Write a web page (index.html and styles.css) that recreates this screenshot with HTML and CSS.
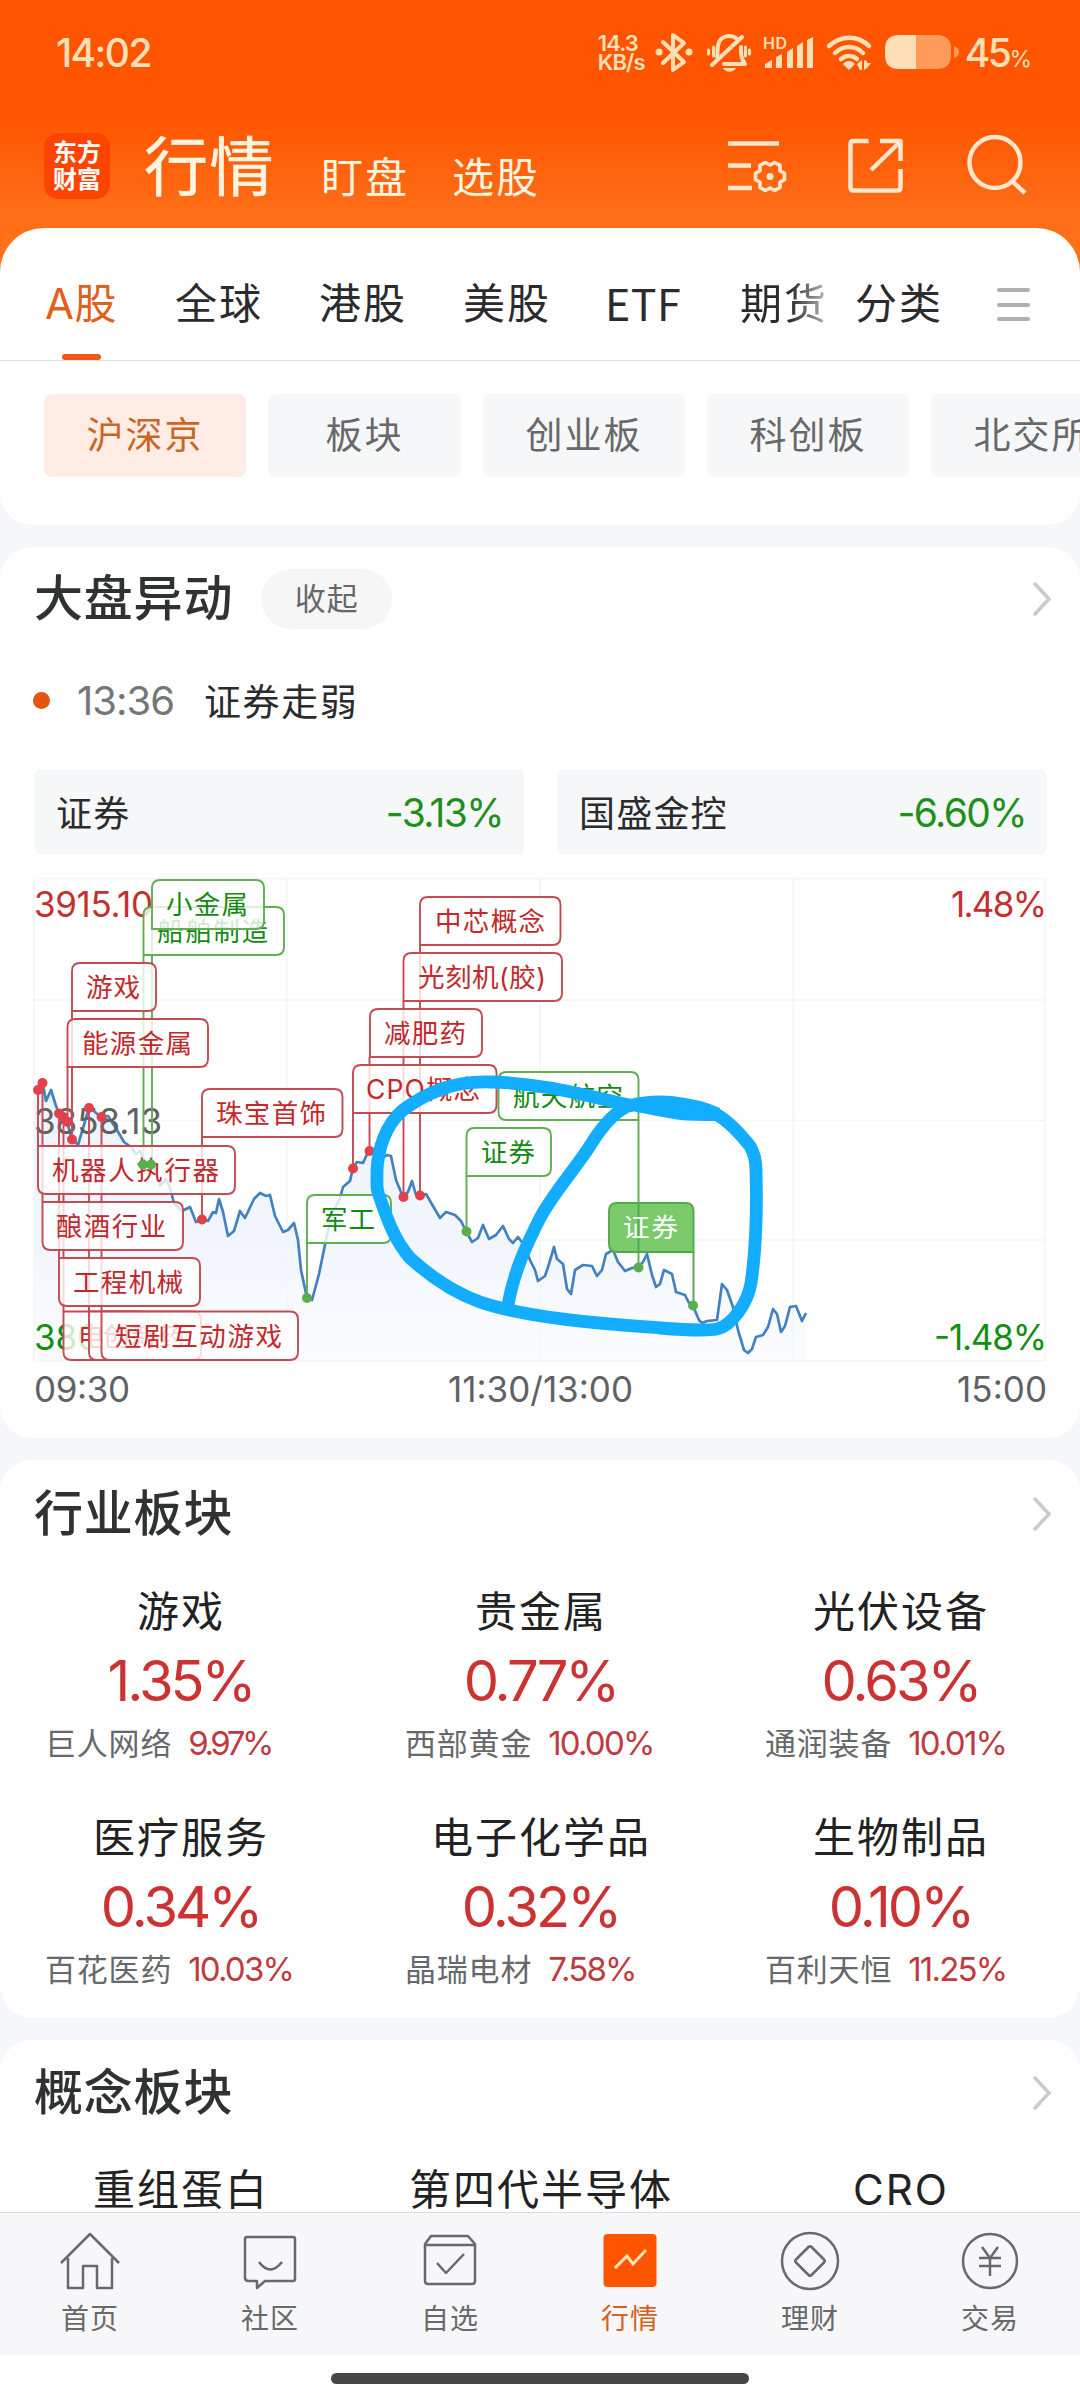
FILE: index.html
```html
<!DOCTYPE html>
<html lang="zh-CN">
<head>
<meta charset="utf-8">
<title>行情</title>
<link rel="stylesheet" href="styles.css">
</head>
<body>
<div class="app">
  <header class="header">
    <div class="status">
      <span class="clock">14:02</span>
      <span class="net"><span>14.3</span><span>KB/s</span></span>
      <svg class="status-icons" viewBox="650 26 320 52" width="320" height="52">
        <g fill="none" stroke="#ffdfb5" stroke-width="4" stroke-linejoin="round" stroke-linecap="round">
          <path d="M664 42l21 20-11 8V35l11 8-21 20" />
          <path d="M713 65L743 37" />
          <path d="M718 57c1-4 0-8 1-11 1-7 6-10 11-10 4 0 6 1 8 3M742 47c0 8 0 11 4 17H725" />
          <path d="M709.500 50v4M714.500 47v9M746.500 47v9M750.500 50v4" stroke-width="3"/>
          <path d="M830 46c12-11 29-11 40 0M836 53c8-8 20-8 28 0M842 59c5-4 11-4 16 0" stroke-width="4.500"/>
        </g>
        <g fill="#ffdfb5">
          <circle cx="660" cy="52" r="3.500"/><circle cx="690" cy="52" r="3.500"/>
          <path d="M724 68h13c-3 5-10 5-13 0z"/>
          <text x="764" y="48.500" font-size="16" class="hd" textLength="24">HD</text>
          <path d="M766 68v-4l7-4v8zM777 68v-11l6-3v14zM788 68V52l6-4v20zM798 68V46l6-4v26zM808 68V40l6-3v31z"/>
          <path d="M844 64c3-4 9-4 12 0l-6 6z"/>
          <path d="M858 64l5-4v10h-2zM865 60v10l3-2 4-5h-4v-2z"/>
          <path d="M900 35h17v34h-17q-14 0-14-14V49q0-14 14-14z"/>
          <path d="M917 35h21q14 0 14 14v6q0 14-14 14h-21zM955 46q5 2 5 6t-5 6z" opacity=".5"/>
        </g>
      </svg>
      <span class="battery">45<small>%</small></span>
    </div>
    <div class="topbar">
      <div class="logo"><span>东方</span><span>财富</span></div>
      <span class="top-main">行情</span>
      <span class="top-sub">盯盘</span>
      <span class="top-sub">选股</span>
      <svg class="top-icons" viewBox="720 130 320 70" width="320" height="70">
        <g fill="none" stroke="#ffe6cc" stroke-width="4.500" stroke-linejoin="round">
          <path d="M728 143.500h51M728 165.500h23M728 188h24"/>
          <path d="M784.500 173.400V179.600L780 182.200V187.600L774.600 190.500 770 188 765.400 190.500 760 187.600V182.200L755.500 179.600V173.400L760 170.800V165.400L765.400 162.500 770 165 774.600 162.500 780 165.400V170.800Z" stroke-width="3.600"/>
          <path d="M868.500 141h-15q-3 0-3 3v43.500q0 3 3 3h44q3 0 3-3V169M880 141h20.500v20M900 142l-29 28"/>
          <circle cx="995" cy="162.500" r="25.500"/><path d="M1012 181l13 12"/>
        </g>
        <circle cx="770" cy="176.500" r="3.500" fill="#ffe6cc"/>
      </svg>
    </div>
  </header>

  <main class="feed">
    <section class="card tabs-card">
      <nav class="tabs">
        <span class="tab tab-active">A股</span><span class="tab">全球</span><span class="tab">港股</span><span class="tab">美股</span><span class="tab">ETF</span><span class="tab tab-fade">期货</span><span class="tab tab-last">分类</span>
        <span class="menu"><i></i><i></i><i></i></span>
      </nav>
      <div class="chips">
        <span class="chip chip-active">沪深京</span><span class="chip chip-short">板块</span><span class="chip">创业板</span><span class="chip">科创板</span><span class="chip">北交所</span>
      </div>
    </section>

    <section class="card move-card">
      <div class="card-head">
        <h2>大盘异动</h2><span class="fold">收起</span>
        <svg class="chevron" viewBox="0 0 20 34" width="20" height="34"><path d="M2 2l14 15L2 32"/></svg>
      </div>
      <div class="event"><i class="dot"></i><span class="event-time">13:36</span><span class="event-name">证券走弱</span></div>
      <div class="quotes">
        <div class="quote"><span>证券</span><b>-3.13%</b></div>
        <div class="quote"><span>国盛金控</span><b>-6.60%</b></div>
      </div>
      <svg class="chart" viewBox="0 870 1080 568" width="1080" height="568">
        <defs>
          <linearGradient id="area" x1="0" y1="1080" x2="0" y2="1360" gradientUnits="userSpaceOnUse"><stop offset="0" stop-color="#edf3fb"/><stop offset=".6" stop-color="#f2f6fc"/><stop offset="1" stop-color="#fbfcff"/></linearGradient>
        </defs>
        <path class="area" d="M34 1361V1090L38 1090 42 1082 46 1101 51 1090 56 1106 67 1122 72 1139 78 1145 83 1128 89 1108 101 1117 108 1116 124 1142 136 1154 147 1166 155 1168 160 1186 170 1188 174 1203 182 1211 190 1207 196 1222 208 1221 219 1199 228 1236 234 1231 240 1211 245 1218 260 1193 270 1195 275 1216 283 1232 294 1223 298 1240 307 1298 312 1300 327 1235 333 1212 343 1187 353 1168 369 1150 391 1156 396 1180 403 1197 412 1181 416 1195 426 1194 440 1218 455 1215 466 1231 472 1242 483 1225 489 1239 503 1226 513 1243 524 1245 538 1281 545 1276 554 1247 563 1264 571 1294 575 1270 592 1266 597 1276 606 1254 613 1250 625 1271 638 1267 647 1254 656 1287 664 1270 676 1292 685 1295 702 1323 717 1320 722 1284 733 1307 744 1350 756 1337 763 1335 773 1309 781 1332 790 1307 802 1321 806 1313V1361Z"/>
        <path class="grid-lines" d="M34 878.500H1046M34 1000H1046M34 1120.500H1046M34 1240H1046M34 1361H1046M34 878V1361M287 878V1361M540 878V1361M793 878V1361M1045 878V1361"/>
        <polyline class="price" points="38,1090 42.500,1082 46,1101 51,1090 56,1106 59,1113 67,1122 72,1139 78,1145 83,1128 89,1108 95,1112 101,1117 108,1116 117,1130 124,1142 131,1147 136,1154 140,1151 147,1166 155,1168 160,1186 166,1179 170,1188 174,1203 182,1211 190,1207 196,1222 202,1220 208,1221 213,1212 216,1213 219,1199 223,1212 228,1236 234,1231 240,1211 245,1218 254,1199 260,1193 266,1196 270,1195 275,1216 283,1232 288,1230 294,1223 298,1240 301,1270 307,1298 312,1300 319,1274 327,1235 333,1212 340,1198 343,1187 350,1181 353,1168 357,1162 363,1163 369,1150 374,1149 380,1160 387,1155 391,1156 396,1180 403,1197 408,1192 412,1181 416,1195 420,1195 426,1194 433,1206 440,1218 446,1212 455,1215 461,1221 466,1231 472,1242 478,1238 483,1225 489,1239 496,1235 503,1226 509,1239 513,1243 518,1237 524,1245 530,1260 535,1270 538,1281 545,1276 549,1264 554,1247 557,1259 563,1264 567,1289 571,1294 575,1270 583,1265 592,1266 597,1276 602,1270 606,1254 613,1250 618,1262 625,1271 632,1268 638,1267 643,1262 647,1254 652,1275 656,1287 660,1284 664,1270 672,1274 676,1292 685,1295 689,1303 693,1306 699,1320 702,1323 707,1321 717,1320 722,1284 727,1290 733,1307 738,1330 744,1350 748,1353 752,1349 756,1337 763,1335 768,1327 773,1309 777,1314 781,1332 785,1326 790,1307 796,1306 802,1321 806,1313"/>
        <g class="axis">
          <text x="34" y="917" class="up" textLength="119">3915.10</text>
          <text x="34" y="1134" textLength="128">3858.13</text>
          <text x="34" y="1350" class="down" textLength="122">3801.16</text>
          <text x="951" y="917" class="up" textLength="96">1.48%</text>
          <text x="934" y="1350" class="down" textLength="113">-1.48%</text>
          <text x="34" y="1402" textLength="96">09:30</text>
          <text x="448" y="1402" textLength="185">11:30/13:00</text>
          <text x="957" y="1402" textLength="90">15:00</text>
        </g>
        <g class="tag tag-down">
          <path class="pole" d="M143.500 955V1164M152 929V1164M307 1243V1298M466.500 1176V1231M638.500 1120V1267"/>
          <path d="M143.500 955V915q0-8 8-8H276q8 0 8 8V947q0 8-8 8Z"/><text x="158" y="941" textLength="111">船舶制造</text>
          <path d="M152 929V888q0-8 8-8H256q8 0 8 8V921q0 8-8 8Z"/><text x="167" y="914" textLength="82">小金属</text>
          <path d="M307 1243V1203q0-8 8-8H383q8 0 8 8V1235q0 8-8 8Z"/><text x="322" y="1229" textLength="54">军工</text>
          <path d="M466.500 1176V1136q0-8 8-8H543q8 0 8 8V1168q0 8-8 8Z"/><text x="482" y="1162" textLength="54">证券</text>
          <path d="M638.500 1120H506.500q-8 0-8-8V1080q0-8 8-8H630.500q8 0 8 8Z"/><text x="514" y="1106" textLength="110">航天航空</text>
        </g>
        <g class="tag tag-up">
          <path class="pole" d="M38 1090V1146M42.500 1082V1202M59 1113V1258M63.500 1117V1311M67.500 1067V1122M72 1011V1139M89 1108V1311M101.500 1117V1311M202 1137V1219M353 1113V1168M369.500 1057V1150M403.500 1001V1196M420 945V1195"/>
          <path d="M72 1011V971q0-8 8-8H148q8 0 8 8V1003q0 8-8 8Z"/><text x="87" y="997" textLength="54">游戏</text>
          <path d="M67.500 1067V1027q0-8 8-8H200q8 0 8 8V1059q0 8-8 8Z"/><text x="83" y="1053" textLength="110">能源金属</text>
          <path d="M202 1137V1097q0-8 8-8H334.500q8 0 8 8V1129q0 8-8 8Z"/><text x="217" y="1123" textLength="110">珠宝首饰</text>
          <path d="M420 945V905q0-8 8-8H552.500q8 0 8 8V937q0 8-8 8Z"/><text x="436" y="931" textLength="110">中芯概念</text>
          <path d="M403.500 1001V961q0-8 8-8H554q8 0 8 8V993q0 8-8 8Z"/><text x="419" y="987" textLength="128">光刻机(胶)</text>
          <path d="M370 1057V1017q0-8 8-8H474q8 0 8 8V1049q0 8-8 8Z"/><text x="385" y="1043" textLength="82">减肥药</text>
          <path d="M353 1113V1073q0-8 8-8H488.500q8 0 8 8V1105q0 8-8 8Z"/><text x="367" y="1099" textLength="114">CPO概念</text>
          <path d="M38 1146H227q8 0 8 8V1186q0 8-8 8H46q-8 0-8-8Z"/><text x="53" y="1180" textLength="167">机器人执行器</text>
          <path d="M42.500 1202H175q8 0 8 8V1242q0 8-8 8H50.500q-8 0-8-8Z"/><text x="57" y="1236" textLength="110">酿酒行业</text>
          <path d="M59 1258H192q8 0 8 8V1298q0 8-8 8H67q-8 0-8-8Z"/><text x="74" y="1292" textLength="110">工程机械</text>
          <path d="M63.500 1311.500H140q8 0 8 8V1352q0 8-8 8H71.500q-8 0-8-8Z"/><text x="79" y="1346" textLength="54">电机</text>
          <path d="M89 1311.500H193q8 0 8 8V1352q0 8-8 8H97q-8 0-8-8Z"/><text x="104" y="1346" textLength="82">创新药</text>
          <path d="M101.500 1311.500H290q8 0 8 8V1352q0 8-8 8H109.500q-8 0-8-8Z"/><text x="116" y="1346" textLength="167">短剧互动游戏</text>
        </g>
        <g class="tag tag-current">
          <path d="M693.500 1252H617q-8 0-8-8V1211q0-8 8-8H685.500q8 0 8 8Z"/><path class="pole" d="M693.500 1252V1305"/><path class="pole" d="M638.500 1203V1252"/><text x="624" y="1237" textLength="55">证券</text>
        </g>
        <g fill="#e0414a"><circle cx="38" cy="1090" r="5"/><circle cx="42.500" cy="1083" r="5"/><circle cx="59" cy="1113.500" r="5"/><circle cx="63" cy="1117" r="5"/><circle cx="67.500" cy="1122" r="5"/><circle cx="72" cy="1139.500" r="5"/><circle cx="89" cy="1108" r="5"/><circle cx="101.500" cy="1117" r="5"/><circle cx="202" cy="1219.500" r="5"/><circle cx="353" cy="1168.500" r="5"/><circle cx="369.500" cy="1151" r="5"/><circle cx="403.500" cy="1197" r="5"/><circle cx="420" cy="1195.500" r="5"/></g>
        <g fill="#57b04b"><circle cx="143" cy="1164.500" r="5"/><circle cx="151" cy="1164.500" r="5"/><circle cx="307" cy="1298" r="5"/><circle cx="466.500" cy="1231.500" r="5"/><circle cx="638.500" cy="1267.500" r="5"/><circle cx="693" cy="1305.500" r="5"/></g>
        <g class="ink">
          <path d="M634 1106C590 1097 545 1083 490 1082C450 1081 425 1094 403 1110C385 1125 378 1150 377 1170C377 1184 376 1190 380 1198C388 1222 396 1242 410 1258C432 1278 455 1293 480 1302C530 1319 610 1324 660 1328C685 1330 705 1331 717 1329C732 1326 748 1302 751 1283C756 1250 757 1205 756 1170C756 1160 754 1153 750 1146C742 1136 730 1122 716 1114L706 1111"/>
          <path d="M628 1106C615 1112 604 1124 593 1141C578 1166 555 1190 540 1218C528 1242 514 1270 508 1305"/>
          <path class="blot" d="M630 1099Q650 1094 672 1096Q700 1099 720 1108L716 1121Q695 1121 680 1120Q655 1116 632 1111Z"/>
        </g>
      </svg>
    </section>

    <section class="card sector-card">
      <div class="card-head">
        <h2>行业板块</h2>
        <svg class="chevron" viewBox="0 0 20 34" width="20" height="34"><path d="M2 2l14 15L2 32"/></svg>
      </div>
      <div class="sectors">
        <div class="sector"><span class="name">游戏</span><span class="pct">1.35%</span><span class="lead">巨人网络<em class="tight">9.97%</em></span></div>
        <div class="sector"><span class="name">贵金属</span><span class="pct">0.77%</span><span class="lead">西部黄金<em>10.00%</em></span></div>
        <div class="sector"><span class="name">光伏设备</span><span class="pct">0.63%</span><span class="lead">通润装备<em>10.01%</em></span></div>
        <div class="sector"><span class="name">医疗服务</span><span class="pct">0.34%</span><span class="lead">百花医药<em>10.03%</em></span></div>
        <div class="sector"><span class="name">电子化学品</span><span class="pct">0.32%</span><span class="lead">晶瑞电材<em>7.58%</em></span></div>
        <div class="sector"><span class="name">生物制品</span><span class="pct">0.10%</span><span class="lead">百利天恒<em>11.25%</em></span></div>
      </div>
    </section>

    <section class="card concept-card">
      <div class="card-head">
        <h2>概念板块</h2>
        <svg class="chevron" viewBox="0 0 20 34" width="20" height="34"><path d="M2 2l14 15L2 32"/></svg>
      </div>
      <div class="sectors">
        <div class="sector"><span class="name">重组蛋白</span></div>
        <div class="sector"><span class="name">第四代半导体</span></div>
        <div class="sector"><span class="name">CRO</span></div>
      </div>
    </section>
  </main>

  <nav class="bottom">
    <a class="item"><svg viewBox="0 0 64 64" width="64" height="64"><path d="M3 34L32 5l29 29M10 29v30h15V37h14v22h15V29"/></svg><span>首页</span></a>
    <a class="item"><svg viewBox="0 0 64 64" width="64" height="64"><path d="M9 8h46q2 0 2 2v40q0 2-2 2H27l-8 7v-7h-8q-4 0-4-3V10q0-2 2-2zM21 33q11 15 23 0"/></svg><span>社区</span></a>
    <a class="item"><svg viewBox="0 0 64 64" width="64" height="64"><path d="M7 15l6-8h37l7 8v37q0 3-3 3H10q-3 0-3-3zM7 16h50M19 34l9 10 18-19"/></svg><span>自选</span></a>
    <a class="item item-active"><svg viewBox="0 0 64 64" width="64" height="64"><rect x="5.500" y="5" width="53" height="53" rx="4"/><path d="M17 39l12-12 6 8 13-14"/></svg><span>行情</span></a>
    <a class="item"><svg viewBox="0 0 64 64" width="64" height="64"><circle cx="32" cy="32" r="28"/><path d="M30.500 18q1.500-1.500 3 0l12.500 12.500q1.500 1.500 0 3L33.500 46q-1.500 1.500-3 0L18 33.500q-1.500-1.500 0-3z"/></svg><span>理财</span></a>
    <a class="item"><svg viewBox="0 0 64 64" width="64" height="64"><circle cx="32" cy="32" r="27"/><path d="M24 18l8 11 8-11M21 29h22M21 37h22M32 29v18"/></svg><span>交易</span></a>
  </nav>
  <div class="gesture"><i></i></div>
</div>
</body>
</html>
```
FILE: styles.css
```css
* { box-sizing: border-box; }
body {
  margin: 0;
  font-family: Inter, "Noto Sans CJK SC", sans-serif;
  color: #2b2b2d;
}
i, em, b { font-style: normal; font-weight: 400; }
.app {
  width: 1080px;
  height: 2400px;
  display: flex;
  flex-direction: column;
  overflow: hidden;
  background: linear-gradient(#ff5500 0, #ff5500 115px, #ff6e18 215px, #ff7418 290px, #f6f7fa 291px);
}

/* header */
.header { height: 228px; flex: none; }
.status {
  height: 104px;
  padding: 0 48px 0 56px;
  display: flex;
  align-items: center;
  color: #ffdfb5;
}
.clock { width: 543px; font-size: 39px; font-weight: 500; letter-spacing: -1.600px; white-space: nowrap; }
.net { width: 51px; display: flex; flex-direction: column; font-size: 22px; line-height: 19px; font-weight: 600; letter-spacing: -.9px; padding-top: 2px; }
.status-icons { flex: none; }
.hd { font-weight: 600; }
.battery { margin-left: -4px; font-size: 39px; font-weight: 500; letter-spacing: -2.500px; white-space: nowrap; }
.battery small { font-size: 23px; font-weight: 400; letter-spacing: 0; }
.topbar { display: flex; align-items: flex-start; padding: 26px 40px 0 44px; height: 124px; color: #fff4df; }
.logo {
  width: 66px; height: 66px; margin-top: 3px;
  border-radius: 14px;
  background: #ff4400;
  color: #fff;
  display: flex; flex-direction: column; align-items: center; justify-content: center;
  font-size: 24px; line-height: 27px; font-weight: 700;
}
.top-main { margin-left: 34px; font-size: 64px; line-height: 73px; font-weight: 400; -webkit-text-stroke: .6px #fff4df; letter-spacing: 1.500px; width: 177px; white-space: nowrap; }
.top-sub { font-size: 42px; line-height: 95px; letter-spacing: 2px; width: 131px; white-space: nowrap; }
.top-icons { margin-left: auto; flex: none; }

/* cards */
.feed { flex: 1; min-height: 0; overflow: hidden; display: flex; flex-direction: column; gap: 22px; }
.card { background: #fff; border-radius: 32px; flex: none; overflow: hidden; }
.tabs-card { height: 297px; border-radius: 44px 44px 32px 32px; }
.tabs {
  height: 133px;
  border-bottom: 1.500px solid #dcdddd;
  display: flex;
  padding-left: 45px;
  font-size: 42px;
  line-height: 152px;
  white-space: nowrap;
}
.tab { letter-spacing: 2px; width: 144px; }
.tab:nth-child(5) { width: 133px; margin-left: -2px; margin-right: 2px; letter-spacing: .5px; font-family: "Noto Sans CJK SC"; font-size: 43px; line-height: 149px; }
.tab-active { position: relative; width: 130px; color: #e0601c; letter-spacing: .5px; }
.tab-active::after { content: ""; position: absolute; left: 17px; bottom: 0; width: 39px; height: 6px; border-radius: 3px; background: #ea5a14; }
.tab-fade { width: 115px; background: linear-gradient(90deg, #2b2b2d 50px, #b5b5b7 86px); background-clip: text; color: transparent; }
.tab-last { width: 142px; }
.menu { display: flex; flex-direction: column; gap: 10.500px; padding-top: 60px; }
.menu i { width: 33px; height: 4px; border-radius: 2px; background: #b0b0b0; }
.chips { display: flex; gap: 22px; padding: 33px 0 0 44px; }
.chip {
  flex: none; width: 202px; height: 83px;
  border-radius: 8px; background: #f6f7f8; color: #67686a;
  font-size: 37px; line-height: 84px; letter-spacing: 2px; text-align: center;
}
.chip-short { width: 193px; }
.chip-active { background: #ffece5; color: #cc6424; }

.card-head { display: flex; align-items: center; height: 104px; padding: 0 27px 0 34px; }
h2 { margin: 0; font-size: 49px; line-height: 60px; font-weight: 500; letter-spacing: .8px; color: #303133; }
.fold { margin-left: 28px; width: 131px; height: 60px; border-radius: 30px; background: #f6f6f7; color: #66676a; font-size: 31px; line-height: 60px; letter-spacing: 1px; text-align: center; }
.chevron { margin-left: auto; fill: none; stroke: #cacaca; stroke-width: 3.500; stroke-linecap: round; }

.move-card { height: 891px; }
.event { display: flex; align-items: center; height: 98px; padding-left: 33px; font-size: 37px; }
.dot { width: 17px; height: 17px; border-radius: 50%; background: #e2560f; }
.event-time { margin-left: 27px; width: 127px; color: #747678; font-size: 40px; letter-spacing: -1px; }
.event-name { letter-spacing: 1.600px; }
.quotes { display: flex; gap: 33px; padding: 20px 33px 0 34px; }
.quote { flex: 1; height: 86px; display: flex; align-items: center; justify-content: space-between; padding: 0 21px 2px 22px; border-radius: 8px; background: #f6f7f9; font-size: 36px; letter-spacing: 1.200px; }
.quote b { font-size: 39px; letter-spacing: -1.600px; color: #1d8f1d; padding-top: 2px; }

/* intraday chart */
.chart { display: block; margin-top: 15px; }
.area { fill: url(#area); }
.grid-lines { fill: none; stroke: #f4f5f8; stroke-width: 1.500; }
.price { fill: none; stroke: #4381c1; stroke-width: 2.700; stroke-linejoin: round; }
.axis text { font-size: 35px; fill: #606163; }
.axis .up { fill: #c62f2f; }
.axis .down { fill: #128e12; }
.tag path { fill: rgba(255, 255, 255, .8); stroke-width: 1.900; }
.tag .pole { fill: none; }
.tag text { font-size: 26.500px; transform: translateX(-1px); }
.tag-up path { stroke: #c24c52; }
.tag-up text { fill: #c2282c; }
.tag-down path { stroke: #5fae52; }
.tag-down text { fill: #128a12; }
.tag-current path { fill: #7bcb6d; stroke: #52a948; }
.tag-current text { fill: #fff; }
.ink path { fill: none; stroke: #12adff; stroke-width: 12.800; stroke-linecap: butt; stroke-linejoin: round; }
.ink .blot { fill: #12adff; stroke: none; }

/* sector cards */
.sector-card { height: 558px; }
.sector-card .card-head { height: 107px; }
.sectors { display: grid; grid-template-columns: repeat(3, 360px); }
.sector { display: flex; flex-direction: column; align-items: center; height: 226px; }
.name { font-size: 42px; line-height: 60px; letter-spacing: 2px; padding-left: 2px; margin-top: 15px; color: #222; }
.pct { font-size: 56px; line-height: 64px; letter-spacing: -3px; padding-left: 1px; color: #cb3232; margin-top: 7px; }
.lead { align-self: stretch; padding-left: 45px; margin-top: 10px; font-size: 31px; line-height: 40px; letter-spacing: .8px; color: #67686a; white-space: nowrap; }
.lead em { margin-left: 16px; font-size: 33px; letter-spacing: -1.800px; color: #bf3a40; }
.lead .tight { letter-spacing: -3.400px; }
.concept-card { height: 240px; }
.concept-card .card-head { height: 105px; }

/* bottom navigation */
.bottom { flex: none; height: 143px; border-top: 1.500px solid #dddedf; background: #f7f7f9; display: grid; grid-template-columns: repeat(6, 1fr); }
.item { display: flex; flex-direction: column; align-items: center; padding-top: 16px; color: #68696b; font-size: 28px; line-height: 36px; letter-spacing: 1px; }
.item svg { fill: none; stroke: #68696b; stroke-width: 2.500; stroke-linejoin: round; }
.item span { margin-top: 8px; }
.item-active { color: #d4621f; }
.item-active rect { fill: #ff5500; stroke: none; }
.item-active path { stroke: #ffe2b8; stroke-width: 3; stroke-linejoin: miter; }
.gesture { flex: none; height: 45px; background: #fff; display: flex; justify-content: center; padding-top: 18px; }
.gesture i { width: 418px; height: 11px; border-radius: 6px; background: #454648; }
```
